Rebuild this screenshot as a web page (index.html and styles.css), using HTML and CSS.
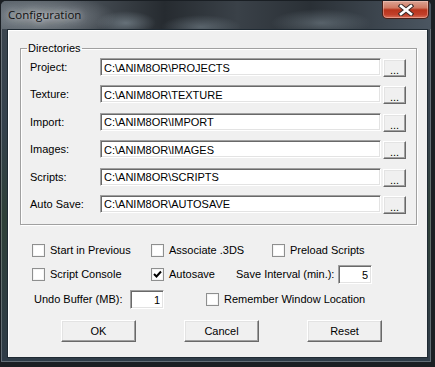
FILE: index.html
```html
<!DOCTYPE html>
<html lang="en">
<head>
    <meta charset="UTF-8">
    <title>Configuration</title>
    <link rel="stylesheet" href="styles.css">
</head>
<body>
    <div class="window">
        <div class="titlebar">
            <span class="title">Configuration</span>
            <button class="close" aria-label="Close">
                <svg width="16" height="12" viewBox="0 0 16 12">
                    <path d="M3 2 L13 10 M13 2 L3 10" stroke="#3a2a28" stroke-width="4.6" stroke-linecap="square"/>
                    <path d="M3 2 L13 10 M13 2 L3 10" stroke="#fff" stroke-width="2.6" stroke-linecap="square"/>
                </svg>
            </button>
        </div>
        <div class="client">
            <fieldset class="dirs">
                <legend>Directories</legend>
                <div class="dir-row"><label>Project:</label><input class="path" value="C:\ANIM8OR\PROJECTS"><button class="btn browse">...</button></div>
                <div class="dir-row"><label>Texture:</label><input class="path" value="C:\ANIM8OR\TEXTURE"><button class="btn browse">...</button></div>
                <div class="dir-row"><label>Import:</label><input class="path" value="C:\ANIM8OR\IMPORT"><button class="btn browse">...</button></div>
                <div class="dir-row"><label>Images:</label><input class="path" value="C:\ANIM8OR\IMAGES"><button class="btn browse">...</button></div>
                <div class="dir-row"><label>Scripts:</label><input class="path" value="C:\ANIM8OR\SCRIPTS"><button class="btn browse">...</button></div>
                <div class="dir-row"><label>Auto Save:</label><input class="path" value="C:\ANIM8OR\AUTOSAVE"><button class="btn browse">...</button></div>
            </fieldset>

            <div class="opt-row first">
                <span class="check col1"><span class="box"></span>Start in Previous</span>
                <span class="check col2"><span class="box"></span>Associate .3DS</span>
                <span class="check"><span class="box"></span>Preload Scripts</span>
            </div>
            <div class="opt-row">
                <span class="check col1"><span class="box"></span>Script Console</span>
                <span class="check col2 short"><span class="box on"><svg width="9" height="9" viewBox="0 0 9 9"><path d="M1 4 L3.5 6.5 L8 1.5" fill="none" stroke="#000" stroke-width="2"/></svg></span>Autosave</span>
                <span class="num-label interval">Save Interval (min.):</span>
                <input class="num" value="5">
            </div>
            <div class="opt-row third">
                <span class="num-label undo">Undo Buffer (MB):</span>
                <input class="num" value="1">
                <span class="check remember"><span class="box"></span>Remember Window Location</span>
            </div>

            <div class="actions">
                <button class="btn push">OK</button>
                <button class="btn push">Cancel</button>
                <button class="btn push">Reset</button>
            </div>
        </div>
    </div>
</body>
</html>
```

FILE: styles.css
```css
body {
    margin: 0;
    background: #1b1f23;
    font-family: "Liberation Sans", Arial, sans-serif;
    font-size: 11px;
    color: #000;
}

.window {
    width: 432px;
    height: 363px;
    box-sizing: border-box;
    border: 1px solid #1a1f24;
    border-radius: 6px 6px 0 0;
    padding-bottom: 4px;
    display: flex;
    flex-direction: column;
    background: linear-gradient(to bottom, #3e4750 0%, #34414c 35%, #2e4038 60%, #2f3c48 100%);
    box-shadow: inset 0 0 0 1px rgba(255,255,255,0.25);
}

.titlebar {
    height: 28px;
    display: flex;
    justify-content: space-between;
    align-items: flex-start;
    padding: 0 2px 0 7px;
    border-radius: 5px 5px 0 0;
    background:
        radial-gradient(ellipse 70px 22px at 45px 16px, rgba(190,196,202,0.5), transparent),
        radial-gradient(ellipse 30px 12px at 125px 22px, rgba(150,165,175,0.5), transparent),
        radial-gradient(ellipse 40px 12px at 200px 26px, rgba(140,155,165,0.45), transparent),
        radial-gradient(ellipse 50px 14px at 320px 22px, rgba(140,155,165,0.45), transparent),
        linear-gradient(to right, #5a636b 0%, #434a51 22%, #262b30 38%, #3a4148 55%, #2a3036 72%, #4b5661 100%);
}

.title {
    font-family: "Open Sans", "Noto Sans", sans-serif;
    font-size: 11.5px;
    line-height: 16px;
    margin-top: 6px;
    color: #111;
    text-shadow: 0 0 6px rgba(255,255,255,0.75), 0 0 12px rgba(255,255,255,0.45);
}

.close {
    width: 47px;
    height: 18px;
    padding: 0;
    border: 1px solid #4a2018;
    border-top: none;
    border-radius: 0 0 5px 5px;
    display: flex;
    align-items: center;
    justify-content: center;
    background: linear-gradient(to bottom, #dba494 0%, #d07a63 40%, #b8341c 52%, #c2402a 80%, #d8705a 100%);
    box-shadow: inset 0 0 0 1px rgba(255,220,210,0.4);
}

.client {
    flex: 1;
    margin: 0 3px 0 6px;
    background: #f0f0f0;
    border: 1px solid #1f2a33;
    box-shadow: inset 1px 1px 0 #fff;
}

.dirs {
    width: 397px;
    box-sizing: border-box;
    margin: 11px 0 0 12px;
    padding: 3px 10px 11px 9px;
    border: 1px solid #a0a0a0;
    box-shadow: 1px 1px 0 #fff, inset 1px 1px 0 #fff;
    display: flex;
    flex-direction: column;
    gap: 9.4px;
    min-width: 0;
}

.dirs legend {
    line-height: 14px;
    padding: 0 1px;
    margin-left: -3px;
}

.dir-row {
    display: flex;
    align-items: flex-start;
    height: 18px;
}

.dir-row label {
    width: 70px;
    line-height: 18px;
}

.path, .num {
    box-sizing: border-box;
    height: 18px;
    border: 1px solid;
    border-color: #a0a0a0 #fff #fff #a0a0a0;
    box-shadow: inset 1px 1px 0 #696969, inset -1px -1px 0 #e3e3e3;
    background: #fff;
    font-family: "Liberation Sans", Arial, sans-serif;
    font-size: 11px;
    padding: 1px 0 0 3px;
    outline: none;
    color: #000;
}

.path {
    width: 281px;
}

.btn {
    box-sizing: border-box;
    border: 1px solid;
    border-color: #fff #696969 #696969 #fff;
    box-shadow: inset -1px -1px 0 #a0a0a0, inset 1px 1px 0 #e3e3e3;
    background: #f0f0f0;
    font-family: "Liberation Sans", Arial, sans-serif;
    font-size: 11px;
    color: #000;
    padding: 0;
}

.browse {
    width: 23px;
    height: 18px;
    margin: 1px 0 0 2px;
    line-height: 20px;
}

.opt-row {
    display: flex;
    align-items: center;
    height: 19px;
    padding-left: 24px;
    margin-top: 5px;
}

.opt-row.first {
    margin-top: 16px;
}

.opt-row.third {
    margin-top: 6px;
    padding-left: 26px;
}

.check {
    display: flex;
    align-items: center;
    gap: 5px;
}

.col1 {
    width: 119px;
}

.col2 {
    width: 121px;
}

.col2.short {
    width: 85px;
}

.box {
    width: 13px;
    height: 13px;
    box-sizing: border-box;
    border: 1px solid #8e8f8f;
    background: #fff;
    box-shadow: inset 0 0 0 1px #f4f4f4;
    display: flex;
    align-items: center;
    justify-content: center;
}

.num-label.interval {
    width: 102px;
}

.num-label.undo {
    width: 96px;
}

.num {
    width: 34px;
    height: 19px;
    text-align: right;
    padding: 1px 3px 0 0;
}

.remember {
    margin-left: 42px;
}

.actions {
    display: flex;
    gap: 48px;
    padding-left: 53px;
    margin-top: 11px;
}

.push {
    width: 75px;
    height: 22px;
}
```
